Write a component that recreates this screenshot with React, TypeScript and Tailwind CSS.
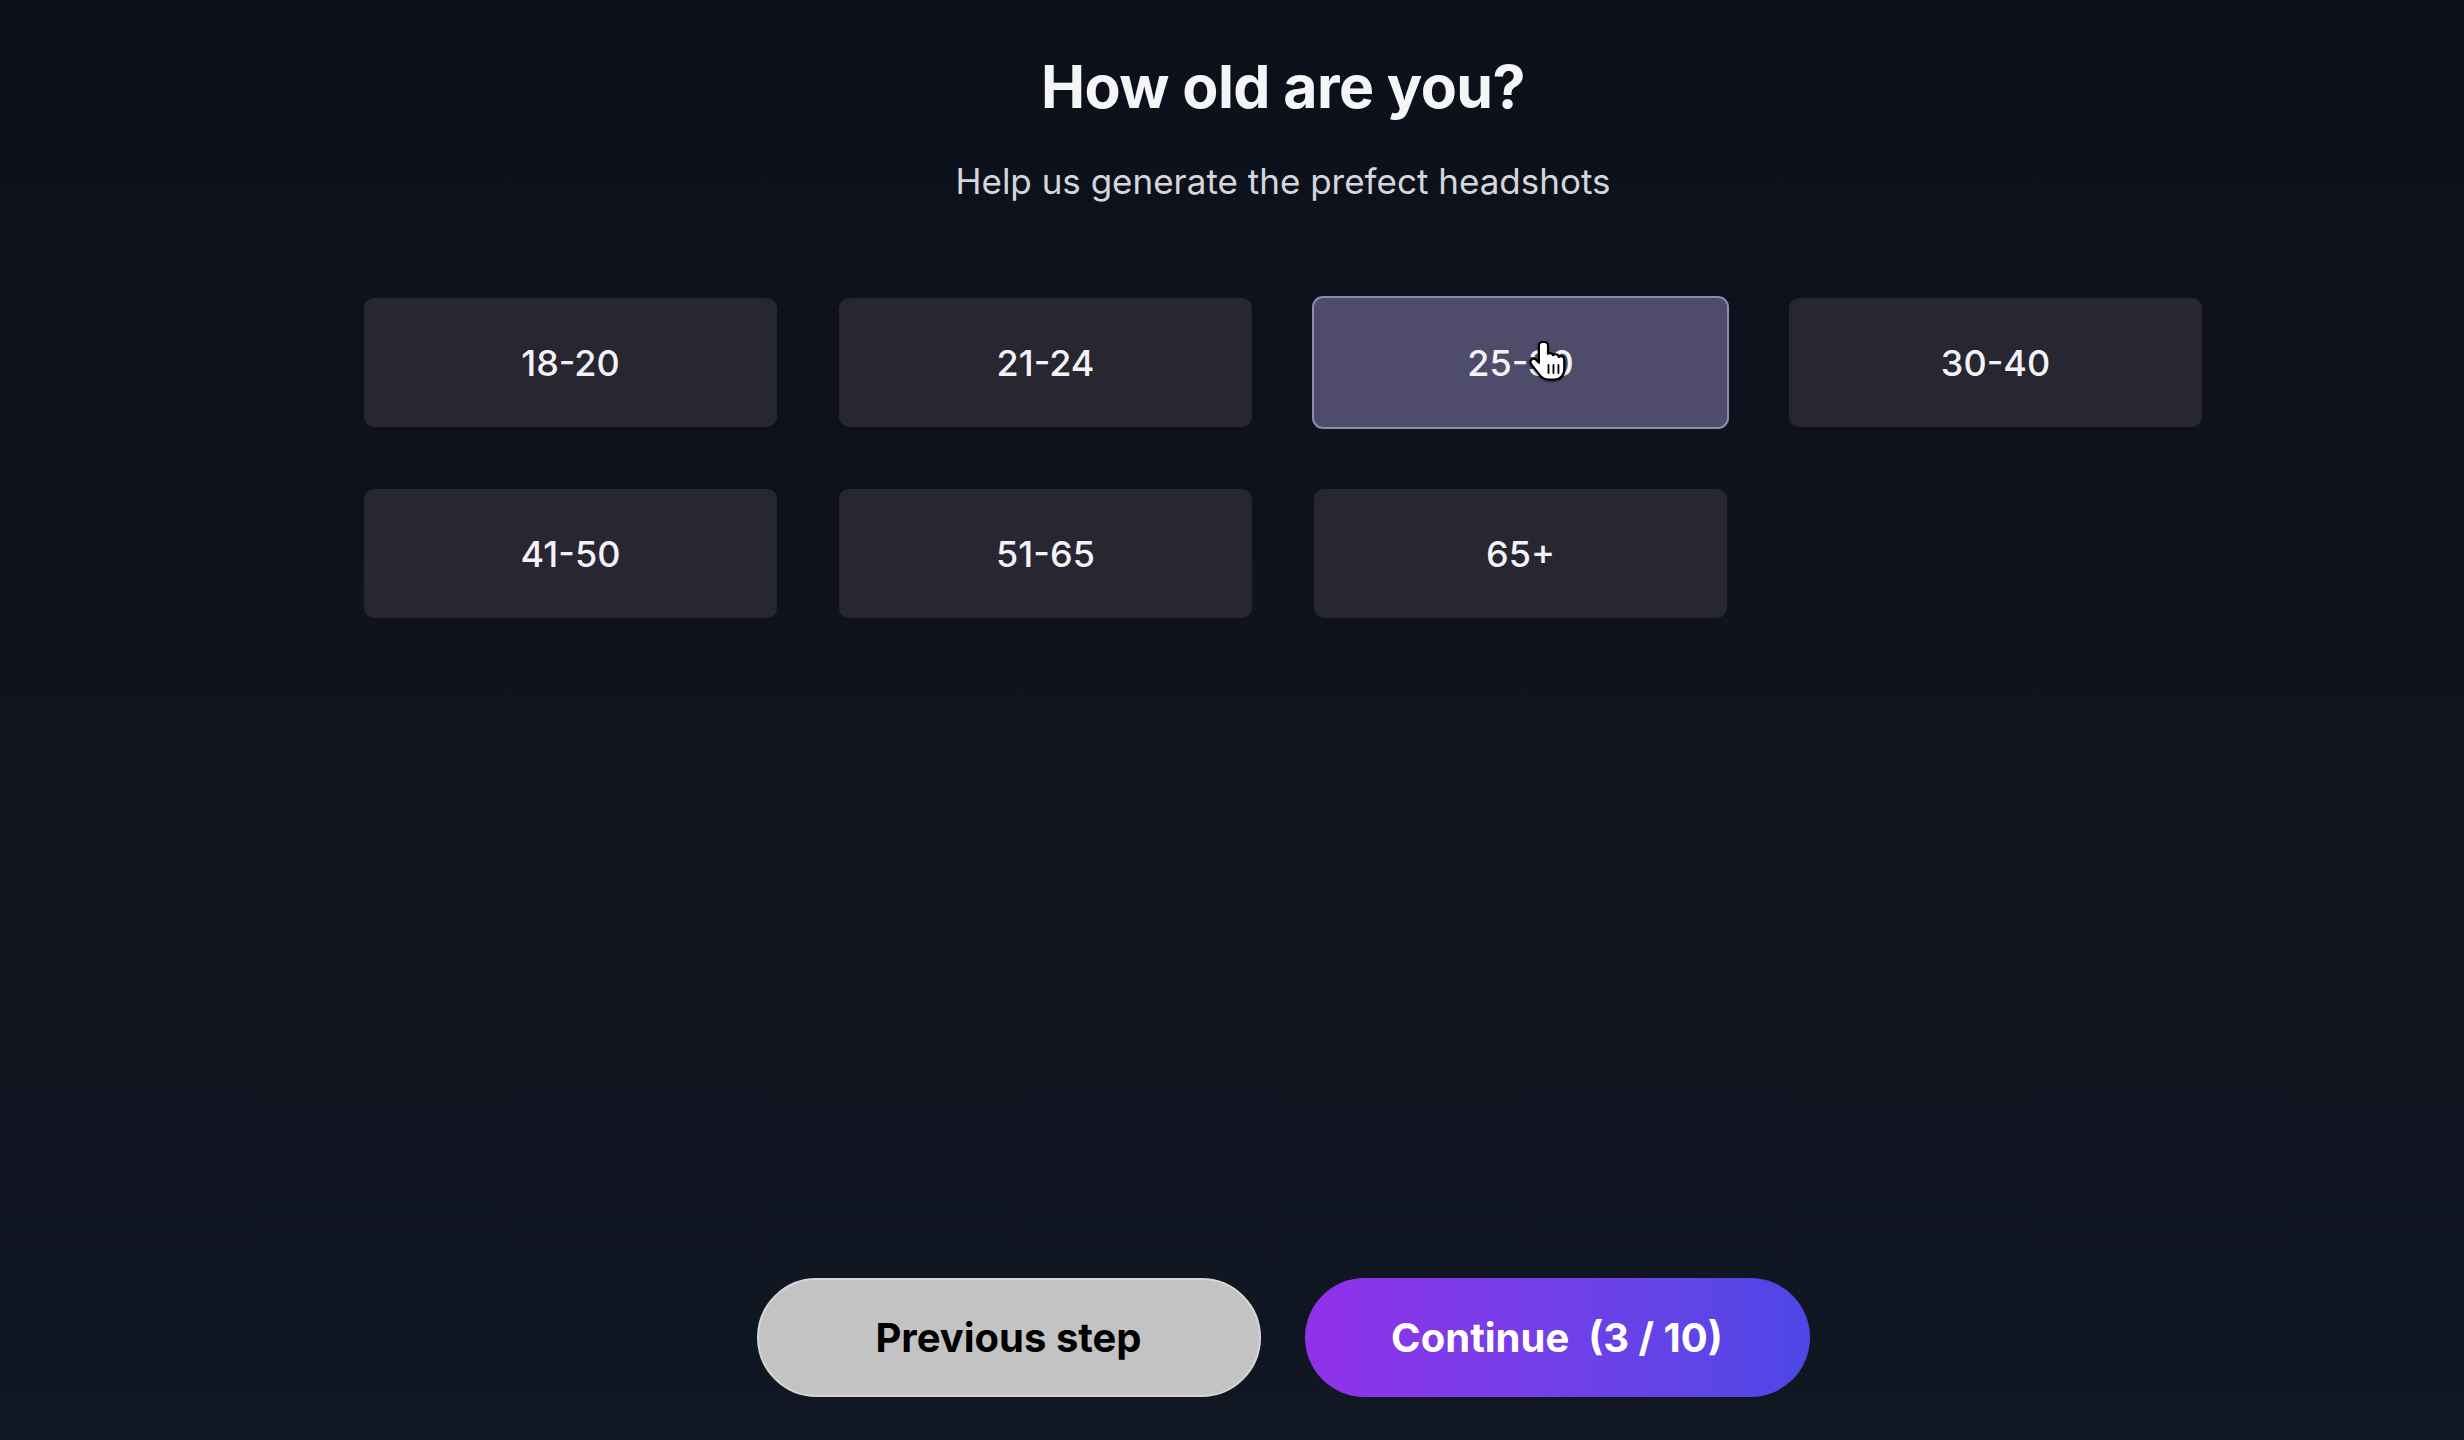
import { useState } from 'react';

const ageRanges = ['18-20', '21-24', '25-30', '30-40', '41-50', '51-65', '65+'];

function HandCursor() {
  return (
    <svg
      className="absolute left-[214px] top-[42px] h-[48px] w-[40px] pointer-events-none drop-shadow-[0_1px_1px_rgba(0,0,0,0.5)]"
      viewBox="0 0 24 29"
      fill="none"
    >
      <path
        d="M8.5 1.2c-1.1 0-2 .9-2 2v10.6l-1.7-1.8c-.8-.8-2-.8-2.8 0-.7.7-.8 1.9-.1 2.7l5 6.4c1.3 1.7 3.3 2.8 5.5 2.8h3.4c3.3 0 6-2.7 6-6v-6.2c0-1.1-.9-2-2-2-.5 0-1 .2-1.3.5-.2-.9-1-1.6-2-1.6-.6 0-1.1.2-1.5.6-.3-.8-1-1.3-1.9-1.3-.4 0-.8.1-1.1.3V3.2c0-1.1-.9-2-2-2z"
        fill="#ffffff"
        stroke="#000000"
        strokeWidth={1.3}
        strokeLinejoin="round"
      />
      <path d="M12.3 15v5M15.3 15v5M18.3 15v5" stroke="#000000" strokeWidth={1.1} strokeLinecap="round" />
    </svg>
  );
}

export default function App() {
  const [selectedAge, setSelectedAge] = useState<string | null>('25-30');

  return (
    <div className="min-h-screen w-full bg-linear-to-b from-[#0c101b] to-[#111722] font-['Inter','Liberation_Sans',sans-serif] text-white">
      <div className="flex min-h-screen flex-col items-center pl-[102px]">
        {/* Header */}
        <h1 className="mt-[57px] text-[59px] leading-none font-bold tracking-[-0.01em] text-[#f5f5f7]">
          How old are you?
        </h1>
        <p className="mt-[48px] text-[35px] leading-none text-[#d4d6dc]">
          Help us generate the prefect headshots
        </p>

        {/* Age options */}
        <div className="mt-[99px] grid grid-cols-[repeat(4,413px)] gap-[62px]">
          {ageRanges.map((age) => {
            const active = selectedAge === age;
            return (
              <button
                key={age}
                onClick={() => setSelectedAge(age)}
                className={
                  active
                    ? 'relative -m-[2px] flex h-[133px] items-center justify-center rounded-[11px] border-2 border-[#8e8aac] bg-[#4f4b6b] text-4xl font-medium text-[#f3f2f7]'
                    : 'relative flex h-[129px] items-center justify-center rounded-[10px] border-2 border-[#282631] bg-[#282631] text-4xl font-medium text-[#f3f2f7]'
                }
              >
                {age}
                {active && <HandCursor />}
              </button>
            );
          })}
        </div>

        <div className="flex-1" />

        {/* Footer */}
        <div className="mb-[43px] flex gap-[44px]">
          <button className="flex h-[119px] w-[504px] items-center justify-center rounded-full border-2 border-[#d6d6d6] bg-[#c3c3c3] text-[40px] font-bold text-black">
            Previous step
          </button>
          <button className="flex h-[119px] w-[505px] items-center justify-center rounded-full bg-linear-to-r from-[#9131ea] to-[#4d47e6] text-[40px] font-bold whitespace-pre text-white">
            {'Continue  (3 / 10)'}
          </button>
        </div>
      </div>
    </div>
  );
}
